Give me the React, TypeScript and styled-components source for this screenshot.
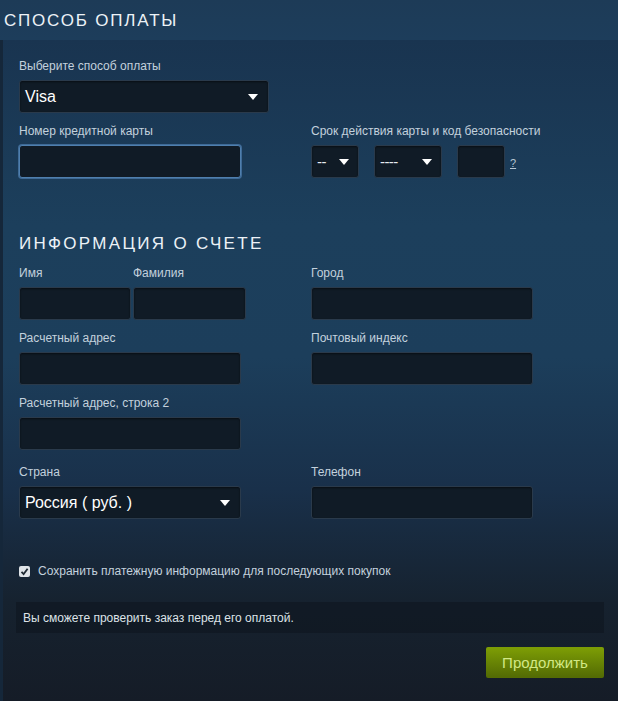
import styled, { createGlobalStyle } from "styled-components";

const GlobalStyle = createGlobalStyle`
    html, body {
        margin: 0;
        padding: 0;
        background: #16283a;
    }
    * {
        box-sizing: border-box;
    }
`

const Page = styled.div`
    width: 618px;
    height: 701px;
    overflow: hidden;
    font-family: Arial, "Liberation Sans", Helvetica, sans-serif;
    background: #15273a;
    display: flex;
    flex-direction: column;
`
const Header = styled.div`
    height: 40px;
    padding: 2px 0 0 4px;
    display: flex;
    align-items: center;
    background: linear-gradient(180deg, #1d3b57 0%, #1d3d5b 100%);
`
const SectionTitle = styled.h2`
    margin: 0;
    font-size: 17px;
    line-height: 20px;
    font-weight: normal;
    letter-spacing: 1.8px;
    color: #ecf2f7;
    text-transform: uppercase;
`
const Panel = styled.div`
    flex: 1;
    margin-left: 3px;
    padding: 18px 14px 0 16px;
    background: linear-gradient(180deg, #193450 0%, #1c3f5c 28%, #1c3e5b 48%, #19304a 68%, #16222f 85%, #151c27 100%);
`
const Label = styled.div`
    font-size: 12px;
    line-height: 16px;
    color: #c3d1dd;
    margin-bottom: 6px;
    white-space: nowrap;
`
const Field = styled.div`
    display: flex;
    flex-direction: column;
`
const Box = styled.div<{ $w: number; $focus?: boolean }>`
    width: ${p => p.$w}px;
    height: 33px;
    flex: none;
    border-radius: 3px;
    background: #101b26;
    border: 1px solid ${p => p.$focus ? "#4f7fae" : "#2a3a4b"};
    box-shadow: ${p => p.$focus ? "0 0 0 1px #3e6a96" : "inset 0 1px 2px rgba(0,0,0,0.5)"};
    display: flex;
    align-items: center;
    justify-content: space-between;
    padding: 0 ${p => p.$w < 80 ? 9 : 10}px 0 5px;
    color: #ffffff;
    font-size: 16px;
`
const SmallValue = styled.span`
    font-size: 15px;
    color: #e6ecf1;
    letter-spacing: -0.6px;
`
const Row = styled.div`
    display: flex;
    align-items: center;
    margin-top: 45px;
`
const Pair = styled.div`
    display: flex;
    gap: 2px;
`
const Columns = styled.div<{ $mt?: number }>`
    display: grid;
    grid-template-columns: 292px 1fr;
    margin-top: ${p => p.$mt ?? 0}px;
`
const ExpiryRow = styled.div`
    display: flex;
    align-items: center;
    gap: 15px;
`
const Help = styled.a`
    font-size: 11px;
    color: #b7c6d3;
    text-decoration: underline;
    margin-left: -10px;
    margin-top: 2px;
`
const BillingTitle = styled(SectionTitle)`
    margin-top: 56px;
    letter-spacing: 2.3px;
`
const Check = styled.span`
    width: 11px;
    height: 11px;
    border-radius: 2px;
    background: #dfe4e8;
    display: inline-flex;
    align-items: center;
    justify-content: center;
    margin-right: 8px;
`
const CheckLabel = styled.span`
    font-size: 12px;
    color: #c3d1dd;
`
const Notice = styled.div`
    margin: 24px 0 0 -3px;
    height: 31px;
    padding-left: 7px;
    display: flex;
    align-items: center;
    font-size: 12px;
    color: #dde3e8;
    background: rgba(12, 18, 26, 0.45);
`
const Actions = styled.div`
    display: flex;
    justify-content: flex-end;
    margin-top: 14px;
`
const ContinueButton = styled.button`
    width: 118px;
    height: 31px;
    border: 0;
    border-radius: 2px;
    background: linear-gradient(180deg, #7c9c05 5%, #546c04 95%);
    color: #d2e885;
    font-family: inherit;
    font-size: 15px;
    cursor: pointer;
`

const Arrow = () => (
    <svg width="10" height="6" viewBox="0 0 10 6">
        <path d="M0 0 L10 0 L5 6 Z" fill="#ffffff" />
    </svg>
)

const Select = ({ w, value, small }: { w: number; value: string; small?: boolean }) => (
    <Box $w={w}>
        {small ? <SmallValue>{value}</SmallValue> : <span>{value}</span>}
        <Arrow />
    </Box>
)

export default function App() {
    return (
        <Page>
            <GlobalStyle />
            <Header>
                <SectionTitle>Способ оплаты</SectionTitle>
            </Header>
            <Panel>
                <Field>
                    <Label>Выберите способ оплаты</Label>
                    <Select w={250} value="Visa" />
                </Field>
                <Columns $mt={10}>
                    <Field>
                        <Label>Номер кредитной карты</Label>
                        <Box $w={222} $focus />
                    </Field>
                    <Field>
                        <Label>Срок действия карты и код безопасности</Label>
                        <ExpiryRow>
                            <Select w={48} value="--" small />
                            <Select w={68} value="----" small />
                            <Box $w={48} />
                            <Help>?</Help>
                        </ExpiryRow>
                    </Field>
                </Columns>

                <BillingTitle>Информация о счете</BillingTitle>

                <Columns $mt={11}>
                    <Pair>
                        <Field>
                            <Label>Имя</Label>
                            <Box $w={112} />
                        </Field>
                        <Field>
                            <Label>Фамилия</Label>
                            <Box $w={113} />
                        </Field>
                    </Pair>
                    <Field>
                        <Label>Город</Label>
                        <Box $w={222} />
                    </Field>
                </Columns>
                <Columns $mt={10}>
                    <Field>
                        <Label>Расчетный адрес</Label>
                        <Box $w={222} />
                    </Field>
                    <Field>
                        <Label>Почтовый индекс</Label>
                        <Box $w={222} />
                    </Field>
                </Columns>
                <Columns $mt={10}>
                    <Field>
                        <Label>Расчетный адрес, строка 2</Label>
                        <Box $w={222} />
                    </Field>
                </Columns>
                <Columns $mt={14}>
                    <Field>
                        <Label>Страна</Label>
                        <Select w={222} value="Россия ( руб. )" />
                    </Field>
                    <Field>
                        <Label>Телефон</Label>
                        <Box $w={222} />
                    </Field>
                </Columns>

                <Row>
                    <Check>
                        <svg width="9" height="9" viewBox="0 0 9 9">
                            <path d="M1.5 4.8 L3.6 7 L7.6 1.8" stroke="#1f2a33" strokeWidth="1.8" fill="none" />
                        </svg>
                    </Check>
                    <CheckLabel>Сохранить платежную информацию для последующих покупок</CheckLabel>
                </Row>

                <Notice>Вы сможете проверить заказ перед его оплатой.</Notice>

                <Actions>
                    <ContinueButton>Продолжить</ContinueButton>
                </Actions>
            </Panel>
        </Page>
    )
}
